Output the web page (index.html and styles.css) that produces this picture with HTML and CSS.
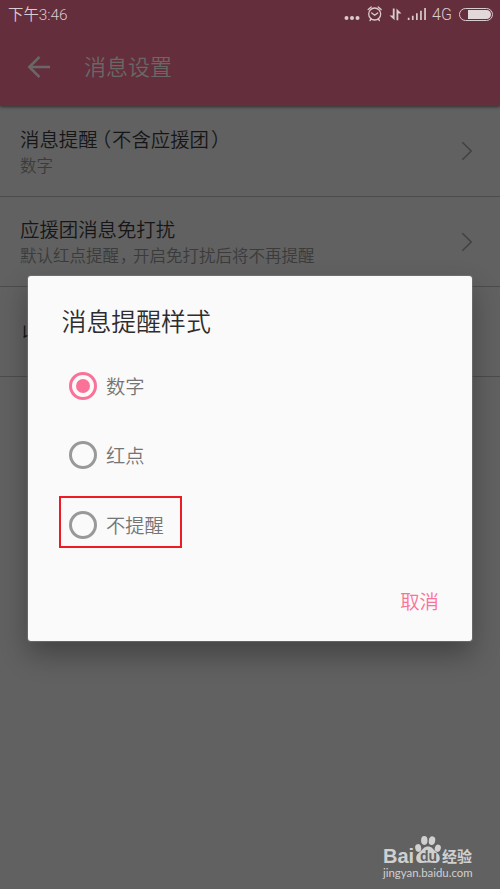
FILE: index.html
```html
<!DOCTYPE html>
<html lang="zh-CN">
<head>
<meta charset="utf-8">
<title>消息设置</title>
<link rel="stylesheet" href="styles.css">
</head>
<body>
<div class="screen">
  <header class="header">
    <div class="status">
      <span class="time">下午3:46</span>
      <svg class="status-icons" width="86" height="20" viewBox="0 0 86 20">
        <g fill="#d9cbcf"><circle cx="4.500" cy="14" r="2"/><circle cx="10" cy="14" r="2"/><circle cx="15.500" cy="14" r="2"/>
        <path d="M50.800 4.500h1.800v11.800l-5.100-4.800h3.300zM54.500 16.300h1.800V9.500h3.200l-5-5z"/>
        <path d="M65.800 13.800h1.700V16h-1.700zM69.900 11.800h1.700V16h-1.700zM74 9.200h1.700V16H74zM78.100 6.800h1.700V16h-1.700zM82.200 4h1.700v12h-1.700z"/></g>
        <g fill="none" stroke="#d9cbcf" stroke-width="1.300" stroke-linecap="round"><circle cx="32.700" cy="10" r="6"/><path d="M26.200 5.500l3-2.500M39.200 5.500l-3-2.500M29.700 9l3 2.300 3-2.300M29.200 15l-1.200 1.500M36.200 15l1.200 1.500"/></g>
      </svg>
      <span class="network">4G</span>
      <span class="battery"><i class="charge"></i></span>
    </div>
    <div class="toolbar">
      <svg class="back" width="24" height="24" viewBox="0 0 24 24"><path d="M23 12H3M12.500 1.800L2.300 12l10.200 10.200" fill="none" stroke="#696867" stroke-width="2.600"/></svg>
      <h1 class="page-title">消息设置</h1>
    </div>
  </header>
  <main class="list">
    <div class="row">
      <div class="row-text">
        <div class="row-title">消息提醒<span class="paren-open">（</span>不含应援团<span class="paren-close">）</span></div>
        <div class="row-sub">数字</div>
      </div>
      <svg class="chevron" width="12" height="20" viewBox="0 0 12 20"><path d="M1.300 1.300L10.200 10l-8.900 8.700" fill="none" stroke="#424242" stroke-width="1.600"/></svg>
    </div>
    <div class="row row-second">
      <div class="row-text">
        <div class="row-title">应援团消息免打扰</div>
        <div class="row-sub">默认红点提醒<span class="comma">，</span>开启免打扰后将不再提醒</div>
      </div>
      <svg class="chevron" width="12" height="20" viewBox="0 0 12 20"><path d="M1.300 1.300L10.200 10l-8.900 8.700" fill="none" stroke="#424242" stroke-width="1.600"/></svg>
    </div>
    <div class="row row-third">
      <div class="row-text"><div class="row-title">收</div></div>
    </div>
  </main>
  <section class="dialog">
    <h2 class="dialog-title">消息提醒样式</h2>
    <div class="options">
      <div class="option"><span class="radio radio-on"></span><span>数字</span></div>
      <div class="option"><span class="radio"></span><span>红点</span></div>
      <div class="option option-marked"><span class="radio"></span><span>不提醒</span></div>
    </div>
    <div class="actions"><span class="cancel">取消</span></div>
  </section>
  <div class="watermark">
    <div class="brand">
      <span class="brand-bai">Bai</span>
      <span class="paw">
        <svg width="28" height="29" viewBox="0 0 28 29" fill="#d0d0d0"><ellipse cx="4.200" cy="13" rx="3" ry="3.900" transform="rotate(-12 4.200 13)"/><ellipse cx="10.300" cy="5.500" rx="3.200" ry="4.400"/><ellipse cx="18" cy="5.700" rx="3.200" ry="4.400" transform="rotate(12 18 5.700)"/><ellipse cx="23.800" cy="13.300" rx="3" ry="3.700" transform="rotate(15 23.800 13.300)"/><path d="M14 11.500c3.500 0 4.800 2.300 6.500 4 2.200 2.300 5.300 3.700 5.300 7.500 0 3.500-2 5-5 5-2.200 0-4.500-.5-6.800-.5s-4.600.5-6.800.5c-3 0-5-1.500-5-5 0-3.800 3.100-5.200 5.300-7.500 1.700-1.700 3-4 6.500-4z"/></svg>
        <span class="brand-du">du</span>
      </span>
      <span class="brand-cn">经验</span>
    </div>
    <div class="site">jingyan.baidu.com</div>
  </div>
</div>
</body>
</html>
```

FILE: styles.css
```css
* { box-sizing: border-box; }
body { margin: 0; }
.screen {
  position: relative;
  width: 500px;
  height: 889px;
  overflow: hidden;
  background: #616161;
  font-family: "Noto Sans CJK SC", sans-serif;
  font-weight: 350;
}
.header {
  position: relative;
  height: 106px;
  background: #652e3c;
  box-shadow: 0 1px 3px rgba(0, 0, 0, .5);
}
.status {
  display: flex;
  align-items: center;
  height: 28px;
  padding: 0 7px 0 8px;
  color: #d9cbcf;
}
.time { flex: 1; padding-top: 2px; font-family: Roboto, "Noto Sans CJK SC", sans-serif; font-size: 15.400px; line-height: 26px; }
.status-icons { flex: none; }
.network { width: 31px; padding: 1px 0 0 4px; font: 350 16px/27px Roboto, sans-serif; }
.battery {
  display: flex;
  justify-content: flex-end;
  width: 34px;
  height: 13px;
  padding: 1px;
  border: 1px solid #d9cbcf;
  border-radius: 6.5px;
}
.charge { width: 23px; background: #e2d8da; border-radius: 0 5px 5px 0; }
.toolbar { display: flex; align-items: center; height: 78px; padding-left: 27px; }
.page-title { margin: -4px 0 0 33px; font-size: 22px; font-weight: 350; line-height: 30px; color: #696867; }
.row {
  display: flex;
  align-items: center;
  height: 90px;
  padding: 0 27px 0 20px;
  border-bottom: 1px solid #4c4c4c;
}
.row:first-child { height: 91px; }
.row-second .row-text { padding-bottom: 2px; }
.row-third { padding-left: 22px; }
.row-text { flex: 1; }
.row-title { font-size: 19.400px; line-height: 28px; color: #161616; }
.row:first-child .row-text { padding-bottom: 1px; }
.paren-open, .paren-close, .comma { font-feature-settings: "halt"; }
.paren-open { margin: 0 1px 0 3.800px; }
.paren-close { margin-left: 2px; }
.row-sub { font-size: 16.500px; line-height: 24px; color: #3b3b3b; }
.comma { margin: 0 5px 0 .8px; }
.dialog {
  position: absolute;
  left: 28px;
  top: 276px;
  width: 444px;
  height: 365px;
  padding-top: 26px;
  border-radius: 3px;
  background: #fafafa;
  box-shadow: 0 0 1px 1px rgba(125, 125, 125, .6), 0 13px 28px rgba(0, 0, 0, .32);
}
.dialog-title { margin: 0 0 19px 33.500px; font-size: 24.900px; font-weight: 350; line-height: 36px; color: #2d2d2d; }
.options { display: flex; flex-direction: column; padding-left: 31px; }
.option {
  display: flex;
  align-items: center;
  gap: 9px;
  width: 123px;
  height: 52px;
  margin-bottom: 17.500px;
  padding: 5px 0 0 8px;
  border: 2px solid transparent;
  font-size: 19.300px;
  line-height: 28px;
  color: #757575;
}
.option-marked { border-color: #ed1c24; }
.radio {
  display: flex;
  align-items: center;
  justify-content: center;
  width: 28px;
  height: 28px;
  border: 3px solid #999;
  border-radius: 50%;
}
.radio-on { border-color: #fb7299; }
.radio-on::after { content: ""; width: 14px; height: 14px; border-radius: 50%; background: #fb7299; }
.actions { display: flex; justify-content: flex-end; padding-right: 33px; margin-top: 21px; }
.cancel { font-size: 19.400px; line-height: 28px; color: #fb7299; }
.watermark { position: absolute; left: 383px; top: 835px; width: 91px; color: #d0d0d0; }
.brand { display: flex; align-items: flex-end; height: 29px; }
.brand-bai { width: 31px; font: bold 20px/15px "Liberation Sans", sans-serif; }
.paw { position: relative; width: 28px; height: 29px; }
.brand-du { position: absolute; left: 6px; top: 14px; font: bold 14px/14px "Liberation Sans", sans-serif; color: #616161; }
.brand-cn { font-size: 15px; font-weight: 700; line-height: 17px; white-space: nowrap; }
.site { padding-top: 1px; font: 11.400px/15px Lato, sans-serif; white-space: nowrap; }
```
